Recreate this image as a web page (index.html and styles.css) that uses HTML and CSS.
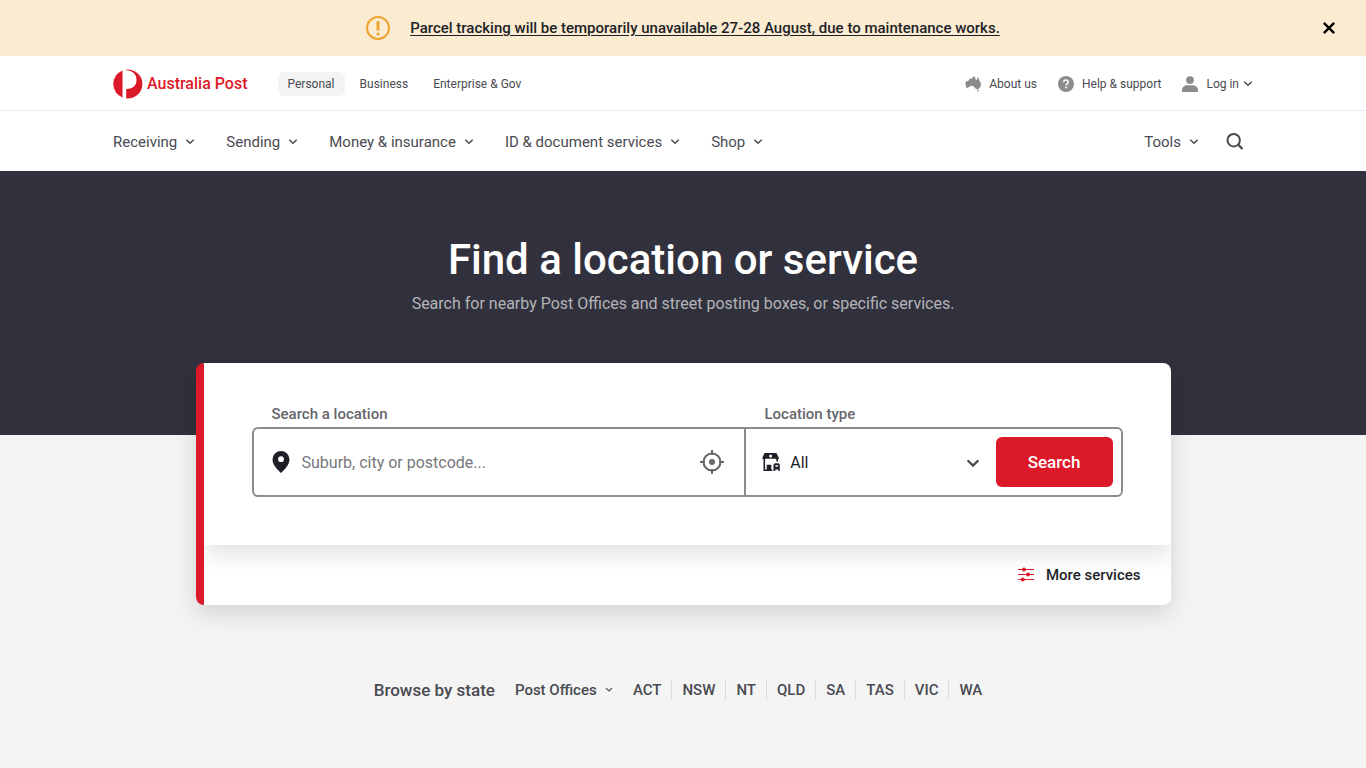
FILE: index.html
```html
<!DOCTYPE html>
<html lang="en">
<head>
<meta charset="utf-8">
<meta name="viewport" content="width=device-width, initial-scale=1">
<title>Find a location or service - Australia Post</title>
<link rel="stylesheet" href="styles.css">
</head>
<body>
<svg class="sprite" aria-hidden="true">
  <symbol id="chevron" viewBox="0 0 10 10"><path d="M1.300 2.700 5 6.200 8.700 2.700" fill="none" stroke="currentColor" stroke-width="1.500"/></symbol>
</svg>
<div class="alert" role="status">
  <div class="alert-body">
    <svg class="icon-24" viewBox="0 0 24 24" fill="none" aria-hidden="true"><circle cx="12" cy="12" r="11" stroke="#eba52c" stroke-width="2"/><path d="M12 5.200v9.300" stroke="#eba52c" stroke-width="3"/><circle cx="12" cy="18" r="1.600" fill="#eba52c"/></svg>
    <a class="alert-link" href="#">Parcel tracking will be temporarily unavailable 27-28 August, due to maintenance works.</a>
  </div>
  <button class="alert-close" type="button" aria-label="Close">
    <svg class="icon-14" viewBox="0 0 14 14" aria-hidden="true"><path d="M1.800 1.800l10.400 10.400M12.200 1.800 1.800 12.200" stroke="#000" stroke-width="2.400"/></svg>
  </button>
</div>
<header class="header">
  <div class="topbar">
    <div class="wrap topbar-row">
      <a class="brand" href="#">
        <svg class="brand-mark" viewBox="0 0 30 30" aria-hidden="true"><path d="M9.500 1.500A14.500 14.500 0 0 0 9.500 28.500Z" fill="#dc1928"/><path d="M13.200.6A14.500 14.500 0 1 1 13.200 29.400V20C19.800 20.200 23.500 16.400 23.500 11 23.500 5.300 19.500 1.500 13.200 1.300Z" fill="#dc1928"/></svg>
        <span>Australia Post</span>
      </a>
      <nav class="segments" aria-label="Segments">
        <a class="segment segment-active" href="#">Personal</a>
        <a class="segment" href="#">Business</a>
        <a class="segment" href="#">Enterprise &amp; Gov</a>
      </nav>
      <nav class="utility" aria-label="Utility">
        <a class="utility-link" href="#">
          <svg class="icon-16" viewBox="0 0 16 16" fill="#8c8c8f" aria-hidden="true"><path d="M0 7.200 1.200 5.600 3.400 4.700 4.500 3 6 2.200 6.900 2.800 7.600 1.200 8.500.6 10.500 1 10 2.700 11.700 4 12.600 2.400 12.800.2 13.800 2.500 14.100 4.300 15.600 6.300 16 8.700 15.300 10.900 13.600 13 12.200 13.400 10.400 12.500 9.800 11 9.100 11.700 8.400 10.100 6.500 9.700 4.400 10.400 3.400 11.500 1.300 12 .9 10.800 1 9Z"/><path d="M12.100 14.300h2l-.8 1.500h-.6Z"/></svg>
          <span>About us</span></a>
        <a class="utility-link" href="#">
          <svg class="icon-16" viewBox="0 0 16 16" aria-hidden="true"><circle cx="8" cy="8" r="8" fill="#8c8c8f"/><path d="M5.700 6.200C5.700 3.400 10.300 3.500 10.300 6c0 1.700-2.200 1.700-2.200 3.500" fill="none" stroke="#fff" stroke-width="1.500"/><circle cx="8.100" cy="11.600" r="1" fill="#fff"/></svg>
          <span>Help &amp; support</span></a>
        <a class="utility-link login" href="#">
          <svg class="icon-16" viewBox="0 0 16 16" fill="#8c8c8f" aria-hidden="true"><circle cx="8" cy="4.100" r="3.900"/><path d="M0 16v-1.800C0 11 2.800 9.300 5.300 9.300h5.400c2.500 0 5.300 1.700 5.300 4.900V16Z"/></svg>
          <span>Log in</span>
          <svg class="chevron" aria-hidden="true"><use href="#chevron"/></svg></a>
      </nav>
    </div>
  </div>
  <div class="wrap mainbar">
    <nav class="menu" aria-label="Main">
      <button class="menu-item" type="button">Receiving<svg class="chevron" aria-hidden="true"><use href="#chevron"/></svg></button>
      <button class="menu-item" type="button">Sending<svg class="chevron" aria-hidden="true"><use href="#chevron"/></svg></button>
      <button class="menu-item" type="button">Money &amp; insurance<svg class="chevron" aria-hidden="true"><use href="#chevron"/></svg></button>
      <button class="menu-item" type="button">ID &amp; document services<svg class="chevron" aria-hidden="true"><use href="#chevron"/></svg></button>
      <button class="menu-item" type="button">Shop<svg class="chevron" aria-hidden="true"><use href="#chevron"/></svg></button>
    </nav>
    <div class="menu tools">
      <button class="menu-item" type="button">Tools<svg class="chevron" aria-hidden="true"><use href="#chevron"/></svg></button>
      <button class="menu-item" type="button" aria-label="Search the site"><svg class="icon-18" viewBox="0 0 18 18" fill="none" stroke="#4a4a52" stroke-width="2" aria-hidden="true"><circle cx="7.700" cy="7.200" r="6.200"/><path d="m12.200 11.700 4.300 4.300" stroke-width="2.400"/></svg></button>
    </div>
  </div>
</header>
<main>
  <section class="hero">
    <h1 class="hero-title">Find a location or service</h1>
    <p class="hero-text">Search for nearby Post Offices and street posting boxes, or specific services.</p>
  </section>
  <form class="card">
    <div class="card-main">
      <div class="labels">
        <label for="place">Search a location</label>
        <label for="kind">Location type</label>
      </div>
      <div class="fields">
        <div class="field">
          <svg class="pin" viewBox="0 0 18 22" aria-hidden="true"><path fill-rule="evenodd" d="M9 0a8.500 8.500 0 0 0-8.500 8.500C.5 14 5.500 18.500 9 22c3.500-3.500 8.500-8 8.500-13.500A8.500 8.500 0 0 0 9 0Zm0 5.300a2.900 2.900 0 1 1 0 5.800 2.900 2.900 0 0 1 0-5.800Z" fill="#1f1f28"/></svg>
          <input class="place" id="place" type="text" placeholder="Suburb, city or postcode...">
          <button class="locate" type="button" aria-label="Use my location">
            <svg class="icon-24" viewBox="0 0 24 24" fill="none" stroke="#66666c" stroke-width="2" aria-hidden="true"><circle cx="12" cy="12" r="8.500"/><path d="M12 0v5M12 19v5M0 12h5M19 12h5"/><circle cx="12" cy="12" r="3" fill="#66666c" stroke="none"/></svg>
          </button>
        </div>
        <div class="field field-kind">
          <svg class="icon-18" viewBox="0 0 18 18" aria-hidden="true"><path fill-rule="evenodd" fill="#1f1f28" d="M2.500 0h12L17 5.200Q16.500 6.200 15 6.200T12.500 5.400Q11 6 8.600 5.400 6.500 6 4.800 5.400 3.500 6.200 2.200 6.200T.2 5.200ZM8.600 1.500A1.500 1.500 0 1 0 8.600 4.500 1.500 1.500 0 0 0 8.600 1.500Z"/><path d="M2.300 5.500v11.700h8M15.200 5.500v3" fill="none" stroke="#1f1f28" stroke-width="1.600"/><path d="M4.700 11.700h4.600V17.500H4.700ZM11.500 18v-5.500A2 2 0 0 1 13.500 10.300h2.300a2 2 0 0 1 2 2.200V18h-1.500v-1.400h-3V18Z" fill="#1f1f28"/><path d="M13.400 13h2.600" stroke="#fff" stroke-width="1.400"/></svg>
          <select class="kind" id="kind"><option>All</option></select>
          <svg class="kind-arrow" viewBox="0 0 14 14" aria-hidden="true"><path d="m2.300 6 4.700 4.500L11.700 6" fill="none" stroke="#4a4a52" stroke-width="2.400" stroke-linecap="round"/></svg>
          <button class="submit" type="submit">Search</button>
        </div>
      </div>
    </div>
    <div class="card-foot">
      <button class="more" type="button">
        <svg class="icon-16" viewBox="0 0 16 16" aria-hidden="true"><path d="M0 2.500h16M0 7.500h16M0 12.500h16" stroke="#dc1928" stroke-width="1.200"/><g fill="#dc1928"><circle cx="6" cy="2.500" r="2"/><circle cx="10" cy="7.500" r="2"/><circle cx="4.800" cy="12.500" r="2"/></g></svg>
        <span>More services</span>
      </button>
    </div>
  </form>
  <section class="browse">
    <h2 class="browse-title">Browse by state</h2>
    <span class="outlet">
      <select class="outlet-select" aria-label="Outlet type"><option>Post Offices</option></select>
      <svg class="outlet-arrow" aria-hidden="true"><use href="#chevron"/></svg>
    </span>
    <nav class="states" aria-label="States">
      <a href="#">ACT</a><a href="#">NSW</a><a href="#">NT</a><a href="#">QLD</a><a href="#">SA</a><a href="#">TAS</a><a href="#">VIC</a><a href="#">WA</a>
    </nav>
  </section>
</main>
</body>
</html>
```

FILE: styles.css
```css
* { box-sizing: border-box; }
body {
  margin: 0;
  background: #f4f4f4;
  color: #4a4a52;
  font-family: Roboto, "Liberation Sans", sans-serif;
}
a { color: inherit; text-decoration: none; }
button, input, select { font: inherit; color: inherit; }
button { padding: 0; border: 0; background: none; cursor: pointer; }
svg { flex: none; display: block; }
.sprite { display: none; }
.icon-14 { width: 14px; height: 14px; }
.icon-16 { width: 16px; height: 16px; }
.icon-18 { width: 18px; height: 18px; }
.icon-24 { width: 24px; height: 24px; }
.chevron { width: 10px; height: 10px; }

.wrap { width: 100%; max-width: 1172px; margin: 0 auto; padding: 0 16px; }

.alert {
  display: grid;
  grid-template-columns: 1fr auto 1fr;
  align-items: center;
  min-height: 56px;
  padding: 0 30px;
  background: #faebd1;
}
.alert-body { grid-column: 2; display: flex; align-items: center; gap: 20px; }
.alert-link {
  color: #1f1f28;
  font-size: 15px;
  font-weight: 500;
  line-height: 20px;
  text-decoration: underline;
  text-underline-offset: 2px;
}
.alert-close { justify-self: end; }

.header { background: #fff; }
.topbar { border-bottom: 1px solid #ebebed; }
.topbar-row { display: flex; align-items: center; min-height: 54px; padding-top: 1px; }
.brand {
  display: flex;
  align-items: center;
  gap: 4px;
  color: #dc1928;
  font-size: 16px;
  font-weight: 500;
}
.brand-mark { width: 30px; height: 30px; }
.segments { display: flex; gap: 5px; margin-left: 30px; font-size: 12px; }
.segment { padding: 4px 10px; border-radius: 6px; line-height: 16px; }
.segment-active { background: #f4f4f4; }
.utility { display: flex; gap: 21px; margin-left: auto; font-size: 12px; }
.utility-link { display: flex; align-items: center; gap: 8px; }
.login .chevron { margin-left: -4px; }

.mainbar { display: flex; align-items: center; justify-content: space-between; min-height: 60px; padding-top: 1px; }
.menu { display: flex; align-items: center; gap: 31px; font-size: 15px; }
.menu-item { display: flex; align-items: center; gap: 8px; line-height: 20px; }
.tools { gap: 27px; padding-right: 9px; }

.hero {
  min-height: 264px;
  padding: 64px 16px 0;
  background: #31313d;
  text-align: center;
}
.hero-title { margin: 0; color: #fff; font-size: 42px; font-weight: 500; line-height: 50px; }
.hero-text { margin: 9px 0 0; color: #b4b4b8; font-size: 16px; line-height: 20px; }

.card {
  position: relative;
  max-width: 975px;
  margin: -72px auto 0;
  overflow: hidden;
  border-left: 8px solid #dc1928;
  border-radius: 8px;
  background: #fff;
  box-shadow: 0 8px 24px rgba(0, 0, 0, 0.14);
}
.card-main {
  padding: 40px 48px 48px;
  box-shadow: 0 8px 24px rgba(0, 0, 0, 0.13);
}
.labels {
  display: grid;
  grid-template-columns: 493fr 378fr;
  padding-bottom: 2px;
  color: #66666c;
  font-size: 15px;
  font-weight: 500;
  line-height: 22px;
}
.labels label { padding-left: 20px; }
.fields {
  display: grid;
  grid-template-columns: 493fr 378fr;
  border: 2px solid #8c8c8f;
  border-radius: 6px;
}
.field { display: flex; align-items: center; min-width: 0; min-height: 66px; padding: 0 20px 0 18px; }
.pin { width: 18px; height: 22px; }
.place {
  flex: 1;
  min-width: 0;
  height: 48px;
  margin: 0 12px;
  padding: 0;
  border: 0;
  outline: 0;
  background: none;
  font-size: 16px;
}
.place::placeholder { color: #77777c; opacity: 1; }
.field-kind { padding: 0 8px 0 16px; border-left: 2px solid #8c8c8f; }
.kind {
  flex: 1;
  min-width: 0;
  height: 48px;
  margin-left: 10px;
  padding: 0;
  border: 0;
  appearance: none;
  background: none;
  color: #1f1f28;
  font-size: 16px;
}
.kind-arrow { width: 14px; height: 14px; margin-right: 16px; pointer-events: none; }
.submit {
  width: 117px;
  height: 50px;
  border-radius: 6px;
  background: #dc1928;
  color: #fff;
  font-size: 17px;
  font-weight: 500;
}
.card-foot { display: flex; align-items: center; justify-content: flex-end; min-height: 60px; padding: 0 30px; }
.more { display: flex; align-items: center; gap: 12px; color: #1f1f28; font-size: 15px; font-weight: 500; }

.browse {
  display: flex;
  flex-wrap: wrap;
  align-items: center;
  justify-content: center;
  gap: 20px;
  padding: 73px 16px;
  font-weight: 500;
}
.browse-title { margin: 0; font-size: 17px; font-weight: 500; line-height: 24px; }
.outlet { display: flex; align-items: center; gap: 8px; font-size: 15px; }
.outlet-select { padding: 0; border: 0; appearance: none; background: none; }
.outlet-arrow { width: 8px; height: 8px; }
.states { display: flex; font-size: 15px; line-height: 20px; }
.states a { padding: 0 10px; }
.states a + a { border-left: 1px solid #dcdcde; }
.states a:first-child { padding-left: 0; }
```
